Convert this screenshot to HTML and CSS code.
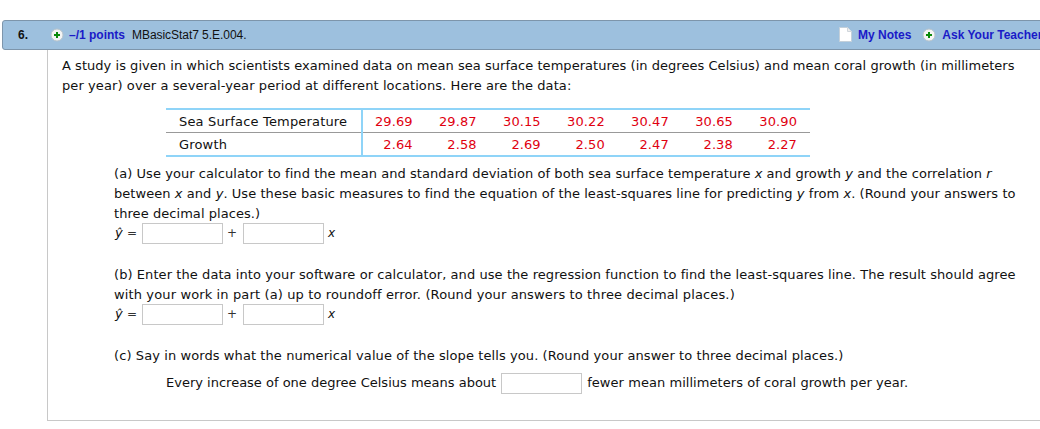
FILE: index.html
```html
<!DOCTYPE html>
<html lang="en">
<head>
<meta charset="utf-8">
<title>Question 6</title>
<link rel="stylesheet" href="styles.css">
</head>
<body>
<div class="question">
  <div class="bar">
    <span class="num">6.</span>
    <svg class="plus" viewBox="0 0 14 14"><circle cx="7" cy="7" r="6" fill="#f4f4f4" stroke="#b8c4cc"/><path d="M7 4v6M4 7h6" stroke="#0a8a0a" stroke-width="2"/></svg>
    <span class="points">–/1 points</span>
    <span class="ref">MBasicStat7 5.E.004.</span>
    <span class="actions">
      <svg class="note" viewBox="0 0 13 15"><path d="M.5.5h8l4 4v10H.5z" fill="#fff" stroke="#c4d0da"/><path d="M8.5.5v4h4" fill="#eee" stroke="#d0d6dc"/></svg>
      <span class="link">My Notes</span>
      <svg class="plus plus-ask" viewBox="0 0 14 14"><circle cx="7" cy="7" r="6" fill="#f4f4f4" stroke="#b8c4cc"/><path d="M7 4v6M4 7h6" stroke="#0a8a0a" stroke-width="2"/></svg>
      <span class="link link-ask">Ask Your Teacher</span>
    </span>
  </div>
  <div class="body">
    <p class="intro">A study is given in which scientists examined data on mean sea surface temperatures (in degrees Celsius) and mean coral growth (in millimeters<br><span class="wide">per year) over a several-year period at different locations. Here are the data:</span></p>
    <table class="data">
      <tr><th>Sea Surface Temperature</th><td>29.69</td><td>29.87</td><td>30.15</td><td>30.22</td><td>30.47</td><td>30.65</td><td>30.90</td></tr>
      <tr><th>Growth</th><td>2.64</td><td>2.58</td><td>2.69</td><td>2.50</td><td>2.47</td><td>2.38</td><td>2.27</td></tr>
    </table>
    <div class="part part-a">
      <p>(a) Use your calculator to find the mean and standard deviation of both sea surface temperature <i>x</i> and growth <i>y</i> and the correlation <i>r</i><br>between <i>x</i> and <i>y</i>. Use these basic measures to find the equation of the least-squares line for predicting <i>y</i> from <i>x</i>. (Round your answers to<br>three decimal places.)</p>
      <div class="eq"><i class="yhat">ŷ</i><span class="op">=</span><span class="box"></span><span class="op plus-sign">+</span><span class="box"></span><i class="x">x</i></div>
    </div>
    <div class="part part-b">
      <p>(b) Enter the data into your software or calculator, and use the regression function to find the least-squares line. The result should agree<br><span class="wider">with your work in part (a) up to roundoff error. (Round your answers to three decimal places.)</span></p>
      <div class="eq"><i class="yhat">ŷ</i><span class="op">=</span><span class="box"></span><span class="op plus-sign">+</span><span class="box"></span><i class="x">x</i></div>
    </div>
    <div class="part part-c">
      <p class="wide">(c) Say in words what the numerical value of the slope tells you. (Round your answer to three decimal places.)</p>
      <div class="sentence">Every increase of one degree Celsius means about<span class="box box-c"></span><span class="tail">fewer mean millimeters of coral growth per year.</span></div>
    </div>
  </div>
</div>
</body>
</html>
```
FILE: styles.css
```css
html, body {
  margin: 0;
  padding: 0;
  background: #fff;
  height: 429px;
  overflow: hidden;
}
body {
  font-family: "DejaVu Sans", Verdana, sans-serif;
  font-size: 13px;
  color: #111;
}
.question {
  width: 1060px;
  padding: 20px 0 0 2px;
}
.bar {
  height: 28px;
  background: #9dc0de;
  border: 1px solid #7d95ab;
  border-radius: 3px 0 0 3px;
  display: flex;
  align-items: center;
  font-family: "Liberation Sans", Arial, sans-serif;
  font-size: 12px;
  white-space: nowrap;
}
.num {
  font-weight: bold;
  margin-left: 15px;
  width: 32px;
  color: #111;
}
.plus {
  width: 14px;
  height: 14px;
  flex: none;
}
.points {
  font-weight: bold;
  color: #1a1ac8;
  margin-left: 5px;
}
.ref {
  margin-left: 7px;
  letter-spacing: -0.05px;
}
.actions {
  display: flex;
  align-items: center;
  position: absolute;
  left: 839px;
  top: 27px;
}
.note {
  width: 13px;
  height: 15px;
}
.link {
  font-weight: bold;
  color: #1a1ac8;
  margin-left: 6px;
}
.plus-ask {
  margin-left: 11px;
}
.body {
  margin-left: 45px;
  height: 370px;
  border-left: 1px solid #c8c8c8;
  border-bottom: 1px solid #c8c8c8;
  padding-left: 14px;
  line-height: 20px;
  white-space: nowrap;
}
p {
  margin: 0;
}
.intro {
  padding-top: 6px;
  letter-spacing: 0.035px;
}
.wide {
  letter-spacing: 0.09px;
}
.wider {
  letter-spacing: 0.13px;
}
.tail {
  letter-spacing: 0.05px;
}
.data {
  border-collapse: collapse;
  margin: 12px 0 0 104px;
  width: 644px;
  border-top: 2px solid #8fd4f8;
  border-bottom: 2px solid #8fd4f8;
  line-height: 16px;
  table-layout: fixed;
}
.data th {
  font-weight: normal;
  text-align: left;
  padding: 4px 13px 2px;
  width: 168.6px;
  border-right: 2px solid #8fd4f8;
  letter-spacing: 0.17px;
}
.data td {
  color: #e00010;
  text-align: right;
  padding: 4px 13px 2px 0;
  letter-spacing: 0.1px;
}
.data tr + tr th, .data tr + tr td {
  border-top: 1px solid #999;
}
.part {
  margin: 0 0 0 52px;
}
.part-a {
  margin-top: 7px;
  letter-spacing: 0.06px;
}
.part-b {
  margin-top: 22px;
  letter-spacing: 0.075px;
}
.part-c {
  margin-top: 22px;
}
.eq {
  display: flex;
  align-items: center;
  height: 20px;
  margin-top: -1px;
  font-size: 12px;
  letter-spacing: 0;
}
.yhat {
  width: 8px;
  margin-left: 1px;
  font-size: 13px;
}
.op {
  margin-left: 4px;
  color: #333;
}
.box {
  display: inline-block;
  width: 79px;
  height: 19px;
  border: 1px solid #c8c8c8;
  background: #fff;
  margin-left: 5px;
  flex: none;
}
.plus-sign {
  margin-left: 4px;
  width: 10px;
}
.plus-sign + .box {
  margin-left: 6px;
}
.x {
  margin-left: 4px;
  font-size: 12px;
}
.sentence {
  display: flex;
  align-items: center;
  margin: 6px 0 0 52px;
  height: 22px;
}
.box-c {
  margin: 0 5px;
}
```
